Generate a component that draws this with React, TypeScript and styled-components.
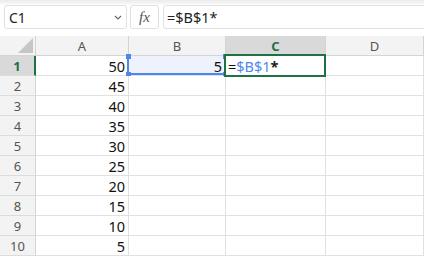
import React from 'react';
import styled, { createGlobalStyle } from 'styled-components';

const GlobalStyle = createGlobalStyle`
  html, body {
    margin: 0;
    padding: 0;
    background: #ffffff;
    font-family: 'Noto Sans', 'Open Sans', sans-serif;
    overflow: hidden;
  }
`;

const values = [50, 45, 40, 35, 30, 25, 20, 15, 10, 5];
const columns = ['A', 'B', 'C', 'D'];

const Page = styled.div`
  width: 424px;
  height: 257px;
  overflow: hidden;
`;

const Toolbar = styled.div`
  display: flex;
  align-items: center;
  gap: 3px;
  height: 36px;
  padding: 5px 0 7px 4px;
  box-sizing: border-box;
  background: linear-gradient(#ebebeb 0px, #f7f7f7 4px, #ffffff 5px);
`;

const NameBox = styled.div`
  position: relative;
  display: flex;
  align-items: center;
  width: 123px;
  height: 24px;
  padding-left: 4px;
  box-sizing: border-box;
  border: 1px solid #e1e1e1;
  border-radius: 3px;
  background: #fff;
  font-size: 14px;
  color: #222;
`;

const Chevron = styled.svg`
  position: absolute;
  right: 4px;
  top: 9px;
`;

const FxBox = styled.div`
  display: flex;
  align-items: center;
  justify-content: center;
  width: 29px;
  height: 24px;
  box-sizing: border-box;
  border: 1px solid #e1e1e1;
  border-radius: 3px;
  background: #fff;
  font-family: 'Liberation Serif', serif;
  font-style: italic;
  font-size: 15px;
  color: #555;
`;

const FormulaInput = styled.div`
  display: flex;
  align-items: center;
  flex: 1;
  height: 24px;
  margin-left: 1px;
  margin-right: -8px;
  padding-left: 3px;
  box-sizing: border-box;
  border: 1px solid #e1e1e1;
  border-radius: 3px;
  background: #fff;
  font-size: 14.5px;
  color: #222;
`;

const Grid = styled.div`
  display: grid;
  grid-template-columns: 36px 93px 97px 100px 98px;
  grid-auto-rows: 20px;
`;

const Corner = styled.div`
  position: relative;
  background: #f3f3f3;
  border-right: 1px solid #d4d4d4;
  border-bottom: 1px solid #d4d4d4;
  box-sizing: border-box;
`;

const Triangle = styled.div`
  position: absolute;
  right: 2px;
  bottom: 2px;
  width: 0;
  height: 0;
  border-left: 15px solid transparent;
  border-bottom: 15px solid #c6c6c6;
`;

const ColHeader = styled.div<{ $active?: boolean }>`
  display: flex;
  align-items: center;
  justify-content: center;
  box-sizing: border-box;
  background: ${(p) => (p.$active ? '#d9d9d9' : '#f3f3f3')};
  border-right: 1px solid #d4d4d4;
  border-bottom: ${(p) => (p.$active ? '2px solid #1e7145' : '1px solid #d4d4d4')};
  font-size: 13px;
  font-weight: ${(p) => (p.$active ? 700 : 400)};
  color: ${(p) => (p.$active ? '#1e7145' : '#555')};
  padding-top: 1px;
`;

const RowHeader = styled.div<{ $active?: boolean }>`
  display: flex;
  align-items: center;
  justify-content: center;
  box-sizing: border-box;
  background: ${(p) => (p.$active ? '#d9d9d9' : '#f3f3f3')};
  border-right: ${(p) => (p.$active ? '2px solid #1e7145' : '1px solid #d4d4d4')};
  border-bottom: 1px solid #dcdcdc;
  font-size: 13px;
  font-weight: ${(p) => (p.$active ? 700 : 400)};
  color: ${(p) => (p.$active ? '#1e7145' : '#555')};
`;

const Cell = styled.div<{ $ref?: boolean }>`
  position: relative;
  display: flex;
  align-items: center;
  justify-content: flex-end;
  padding-right: 3px;
  box-sizing: border-box;
  border-right: 1px solid #e1e1e1;
  border-bottom: 1px solid #e1e1e1;
  background: ${(p) => (p.$ref ? '#edf2fc' : '#ffffff')};
  font-size: 14.5px;
  color: #111;
`;

const EditCell = styled(Cell)`
  justify-content: flex-start;
  padding-left: 2px;
  z-index: 2;
`;

const ActiveFrame = styled.div`
  position: absolute;
  top: -2px;
  left: -2px;
  right: -1px;
  bottom: -2px;
  border: 2px solid #1e7145;
  pointer-events: none;
`;

const RefFrame = styled.div`
  position: absolute;
  top: -1px;
  left: -2px;
  right: -1px;
  bottom: 0;
  border-left: 2px solid #4f86ec;
  border-bottom: 2px solid #4f86ec;
  pointer-events: none;
`;

const Handle = styled.span<{ $x: 'left' | 'right'; $y: 'top' | 'bottom' }>`
  position: absolute;
  width: 5px;
  height: 5px;
  background: #4f86ec;
  ${(p) => (p.$x === 'left' ? 'left: -3.5px;' : 'right: -2px;')}
  ${(p) => (p.$y === 'top' ? 'top: -1px;' : 'bottom: -3.5px;')}
`;

const RefText = styled.span`
  color: #4f86ec;
`;

const Star = styled.span`
  font-weight: 700;
  color: #222;
`;

export default function App() {
  return (
    <Page>
      <GlobalStyle />
      <Toolbar>
        <NameBox>
          C1
          <Chevron width="8" height="5" viewBox="0 0 8 5">
            <path d="M1 1 L4 4 L7 1" fill="none" stroke="#666" strokeWidth="1.1" />
          </Chevron>
        </NameBox>
        <FxBox>fx</FxBox>
        <FormulaInput>=$B$1*</FormulaInput>
      </Toolbar>
      <Grid>
        <Corner>
          <Triangle />
        </Corner>
        {columns.map((c) => (
          <ColHeader key={c} $active={c === 'C'}>
            {c}
          </ColHeader>
        ))}
        {values.map((v, i) => (
          <React.Fragment key={v}>
            <RowHeader $active={i === 0}>{i + 1}</RowHeader>
            <Cell>{v}</Cell>
            {i === 0 ? (
              <>
                <Cell $ref>
                  5
                  <RefFrame>
                    <Handle $x="left" $y="top" />
                    <Handle $x="left" $y="bottom" />
                    <Handle $x="right" $y="top" />
                    <Handle $x="right" $y="bottom" />
                  </RefFrame>
                </Cell>
                <EditCell>
                  =<RefText>$B$1</RefText>
                  <Star>*</Star>
                  <ActiveFrame />
                </EditCell>
              </>
            ) : (
              <>
                <Cell />
                <Cell />
              </>
            )}
            <Cell />
          </React.Fragment>
        ))}
      </Grid>
    </Page>
  );
}
